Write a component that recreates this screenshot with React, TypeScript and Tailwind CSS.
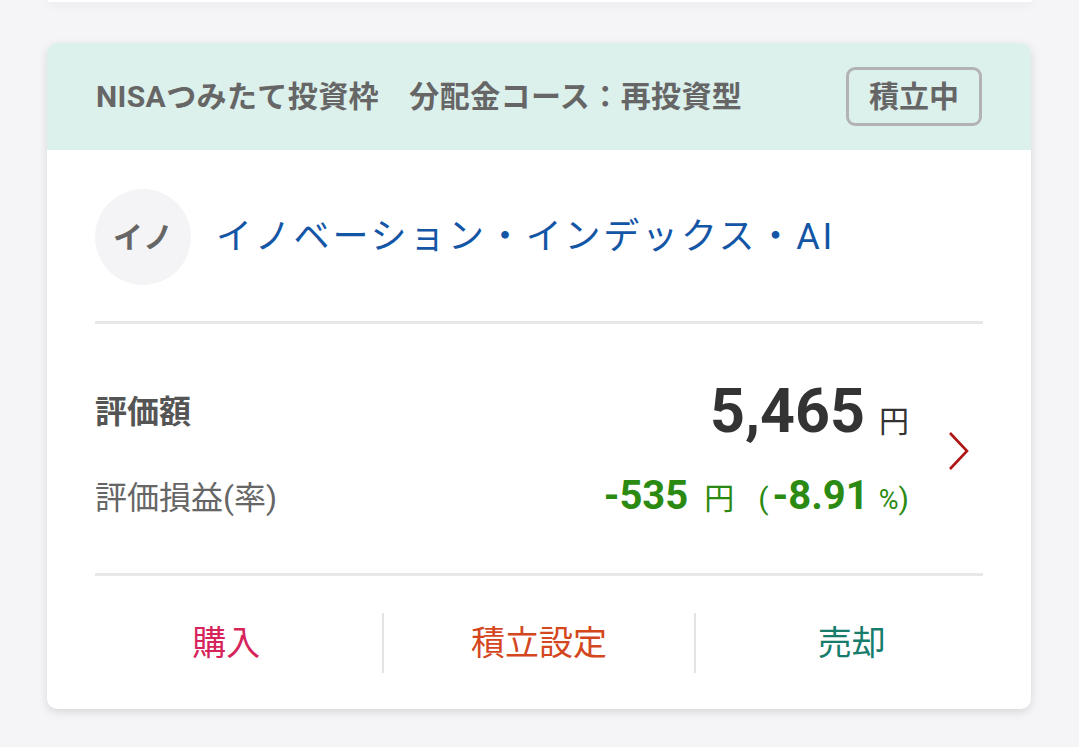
export default function App() {
  return (
    <div className="min-h-[747px] bg-[#f5f5f7] px-[47px] font-['Roboto','Noto_Sans_CJK_JP',sans-serif]">
      {/* bottom edge of the card above */}
      <div className="h-[2px] rounded-b-xl bg-white shadow-[0_2px_8px_rgba(0,0,0,0.12)]" />

      <div className="mt-[41px] w-[984px] overflow-hidden rounded-[10px] bg-white shadow-[0_3px_10px_rgba(0,0,0,0.12)]">
        <div className="flex h-[107px] items-center justify-between bg-[#dcf0ec] px-[49px]">
          <span className="text-[30px] font-bold tracking-[0.4px] text-[#666666]">
            NISAつみたて投資枠　分配金コース：再投資型
          </span>
          <span className="flex h-[59px] w-[136px] items-center justify-center rounded-[9px] border-[3px] border-[#b3b3b3] text-[30px] font-bold text-[#666666]">
            積立中
          </span>
        </div>

        <div className="px-[48px]">
          <div className="flex items-center gap-[25px] border-b-[3px] border-[#e8e8e8] pt-[39px] pb-[36px]">
            <div className="flex h-[96px] w-[96px] items-center justify-center rounded-full bg-[#f4f4f6] text-[30px] font-semibold text-[#666666]">
              イノ
            </div>
            <span className="text-[36px] tracking-[2.8px] text-[#1456a6]">
              イノベーション・インデックス・AI
            </span>
          </div>

          <div className="flex items-center border-b-[3px] border-[#e8e8e8] pt-[56px] pb-[55px]">
            <div className="flex flex-1 flex-col gap-[34px]">
              <div className="flex h-[64px] items-center justify-between">
                <span className="text-[32px] font-bold text-[#555555]">評価額</span>
                <span className="flex items-baseline text-[#333333]">
                  <span className="text-[61px] leading-none font-bold">5,465</span>
                  <span className="ml-[14px] text-[30px]">円</span>
                </span>
              </div>
              <div className="flex h-[40px] items-center justify-between">
                <span className="text-[32px] text-[#666666]">評価損益(率)</span>
                <span className="flex items-baseline text-[#2b8a12]">
                  <span className="text-[40px] leading-none font-bold">-535</span>
                  <span className="ml-[16px] text-[30px]">円</span>
                  <span className="ml-[24px] text-[30px]">(</span>
                  <span className="ml-[4px] text-[40px] leading-none font-bold">-8.91</span>
                  <span className="ml-[10px] text-[27px]">%</span>
                  <span className="text-[30px]">)</span>
                </span>
              </div>
            </div>
            <svg
              className="mt-[4px] mr-[12px] ml-[38px]"
              width="24"
              height="40"
              viewBox="0 0 24 40"
              fill="none"
              stroke="#b01515"
              strokeWidth="2.6"
            >
              <path d="M3 2 L20 20 L3 38" />
            </svg>
          </div>
        </div>

        <div className="flex items-center px-[24px] pt-[37px] pb-[36px]">
          <div className="flex h-[60px] flex-1 items-center justify-center text-[34px] text-[#d6245a]">
            購入
          </div>
          <div className="h-[60px] w-[2px] bg-[#e3e3e3]" />
          <div className="flex h-[60px] flex-1 items-center justify-center text-[34px] text-[#d4471e]">
            積立設定
          </div>
          <div className="h-[60px] w-[2px] bg-[#e3e3e3]" />
          <div className="flex h-[60px] flex-1 items-center justify-center text-[34px] text-[#187c6c]">
            売却
          </div>
        </div>
      </div>
    </div>
  );
}
